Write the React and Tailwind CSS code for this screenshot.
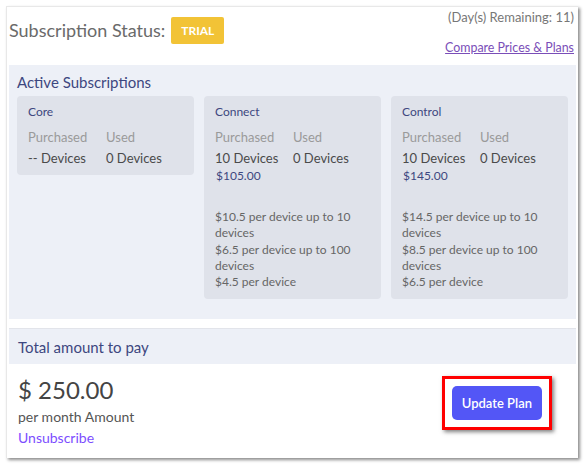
import React from "react";

const plans = [
  { name: "Core", purchased: "-- Devices", used: "0 Devices", price: null, tiers: [] },
  {
    name: "Connect",
    purchased: "10 Devices",
    used: "0 Devices",
    price: "$105.00",
    tiers: ["$10.5 per device up to 10 devices", "$6.5 per device up to 100 devices", "$4.5 per device"],
  },
  {
    name: "Control",
    purchased: "10 Devices",
    used: "0 Devices",
    price: "$145.00",
    tiers: ["$14.5 per device up to 10 devices", "$8.5 per device up to 100 devices", "$6.5 per device"],
  },
];

const PlanCard = ({ plan }) => (
  <div className="self-start rounded-[4px] bg-[#dfe2ea] pl-[11px] pr-2 pt-[8px] pb-[8px]">
    <div className="text-[12px] leading-[16px] text-[#3d4780]">{plan.name}</div>
    <div className="mt-[5px] flex text-[13px] leading-[24px]">
      <div className="w-[78px] text-[#9a9a9a]">Purchased</div>
      <div className="text-[#9a9a9a]">Used</div>
    </div>
    <div className="flex text-[13px] leading-[18px] text-[#4a4a4a]">
      <div className="w-[78px]">{plan.purchased}</div>
      <div>{plan.used}</div>
    </div>
    {plan.price && (
      <div className="mt-[1px] pl-[1px] text-[12px] leading-[16px] text-[#3d4780]">{plan.price}</div>
    )}
    {plan.tiers.length > 0 && (
      <div className="mt-[25px] pb-[1px] text-[12px] leading-[16.25px] text-[#666]">
        {plan.tiers.map((t) => (
          <div key={t}>{t}</div>
        ))}
      </div>
    )}
  </div>
);

export default function App() {
  return (
    <div className="h-[465px] w-[586px] bg-white p-[6px] font-['Lato',sans-serif]">
      <div className="flex h-[452px] w-[572px] flex-col border-l border-t border-[#e8e8e8] bg-white px-[2px] shadow-[2px_2px_3px_rgba(0,0,0,0.45)]">
        {/* Header */}
        <div className="flex h-[58px] items-start justify-between">
          <div className="mt-[10px] flex items-center gap-[6px]">
            <span className="text-[18px] text-[#6a6a6a]">Subscription Status:</span>
            <span className="flex h-[27px] items-center rounded-[2px] bg-[#f2c336] px-[10px] text-[12px] font-bold text-white">
              TRIAL
            </span>
          </div>
          <div className="flex flex-col items-end pr-[2px]">
            <span className="text-[13px] leading-[20px] text-[#777]">(Day(s) Remaining: 11)</span>
            <a href="#" className="mt-[12px] text-[12.4px] leading-[18px] text-[#7a4eb8] underline">
              Compare Prices &amp; Plans
            </a>
          </div>
        </div>

        {/* Active subscriptions */}
        <div className="bg-[#edf0f7] px-[8px] pb-[20px] pt-[7px]">
          <div className="text-[15px] leading-[20px] text-[#3d4780]">Active Subscriptions</div>
          <div className="mt-[4px] grid grid-cols-3 gap-[10px]">
            {plans.map((p) => (
              <PlanCard key={p.name} plan={p} />
            ))}
          </div>
        </div>

        {/* Total */}
        <div className="mt-[9px] flex flex-1 flex-col border-t border-[#e2e4ea]">
          <div className="flex h-[35px] items-center bg-[#edf0f7] px-[9px] text-[15px] text-[#3d4780]">
            Total amount to pay
          </div>
          <div className="flex items-start justify-between pl-[9px] pr-[24px]">
            <div className="pt-[10px]">
              <div className="text-[24px] leading-[32px] text-[#444]">$ 250.00</div>
              <div className="mt-[1px] text-[14px] leading-[20px] text-[#555]">per month Amount</div>
              <div className="text-[14px] leading-[22px] text-[#7c4dff]">Unsubscribe</div>
            </div>
            <div className="mt-[12px] border-[3px] border-[#ff0000] p-[7px] shadow-[2px_2px_4px_rgba(0,0,0,0.5)]">
              <button className="rounded-[5px] bg-[#5356f6] px-[10px] py-[8px] text-[13px] font-semibold leading-[18px] text-white">
                Update Plan
              </button>
            </div>
          </div>
        </div>
      </div>
    </div>
  );
}
